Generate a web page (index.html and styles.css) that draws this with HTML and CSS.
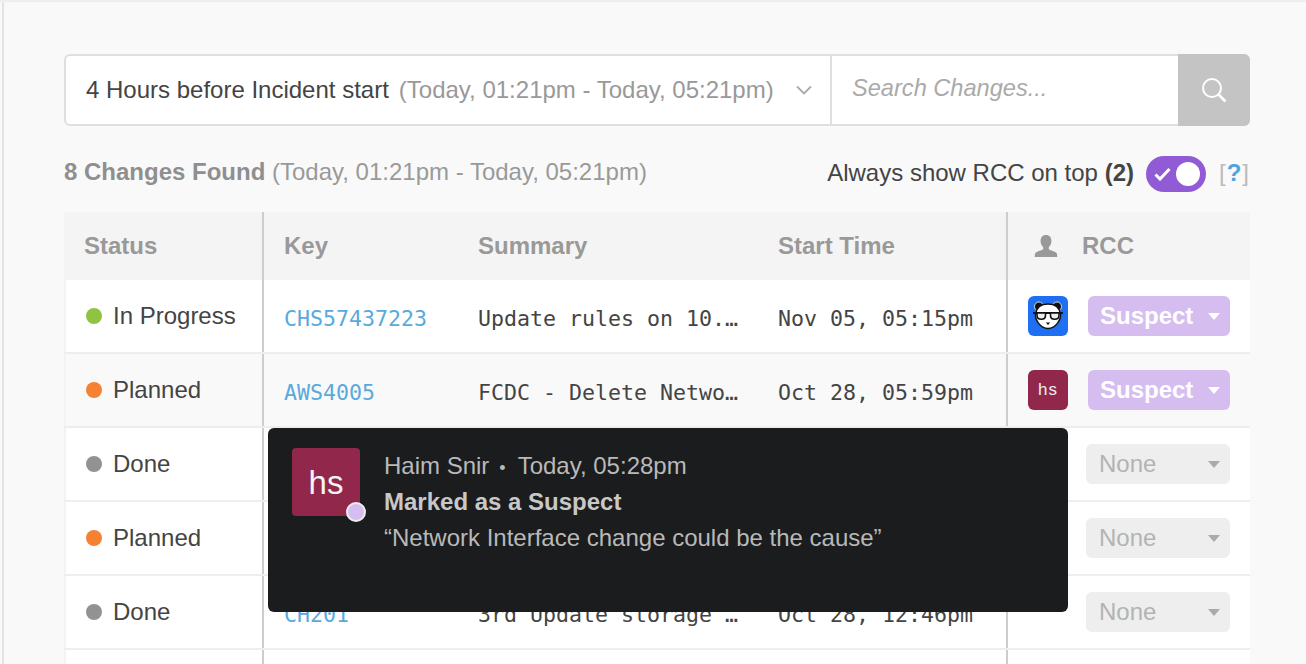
FILE: index.html
```html
<!DOCTYPE html>
<html lang="en">
<head>
<meta charset="utf-8">
<title>Changes</title>
<link rel="stylesheet" href="styles.css">
</head>
<body>
<main class="page">
  <div class="filter">
    <div class="range">
      <span class="range-name">4 Hours before Incident start</span>
      <span class="range-dates">(Today, 01:21pm - Today, 05:21pm)</span>
      <svg class="chevron" width="16" height="10" viewBox="0 0 16 10"><path d="M1 1.500l7 7 7-7" fill="none" stroke="#aaa" stroke-width="1.800"/></svg>
    </div>
    <div class="search"><span class="placeholder">Search Changes...</span></div>
    <div class="search-btn">
      <svg width="28" height="28" viewBox="0 0 28 28"><circle cx="12" cy="12" r="9" fill="none" stroke="#fff" stroke-width="2"/><path d="M18.500 18.500l7 7" stroke="#fff" stroke-width="2.600"/></svg>
    </div>
  </div>

  <div class="summary-bar">
    <div class="found"><strong>8 Changes Found</strong> (Today, 01:21pm - Today, 05:21pm)</div>
    <div class="always">
      <span class="always-label">Always show RCC on top <strong>(2)</strong></span>
      <span class="toggle">
        <svg class="check" width="17" height="14" viewBox="0 0 17 14"><path d="M1.500 7.500l4.500 4.500 9.500-10" fill="none" stroke="#fff" stroke-width="3"/></svg>
        <span class="knob"></span>
      </span>
      <span class="help">[<b>?</b>]</span>
    </div>
  </div>

  <div class="table">
    <div class="row head">
      <div class="cell status">Status</div>
      <div class="cell key divided">Key</div>
      <div class="cell text">Summary</div>
      <div class="cell time">Start Time</div>
      <div class="cell rcc divided">
        <svg class="person" width="24" height="24" viewBox="0 0 24 24"><path d="M12 1c3.600 0 5.400 2.600 5.400 6 0 2.600-1 5-2.600 6.200v1.900c0 1 4 1.600 7.200 3.300 1 .6 1.200 1.600 1.200 4.600H.8c0-3 .2-4 1.200-4.600 3.200-1.700 7.200-2.300 7.200-3.300v-1.900C7.600 12 6.600 9.600 6.600 7c0-3.400 1.800-6 5.400-6z" fill="#999"/></svg>
        <span>RCC</span>
      </div>
    </div>

    <div class="row">
      <div class="cell status"><i class="dot green"></i>In Progress</div>
      <div class="cell key divided mono"><a>CHS57437223</a></div>
      <div class="cell text mono"><span class="clip">Update rules on 10.10.4.2 firewall</span></div>
      <div class="cell time mono">Nov 05, 05:15pm</div>
      <div class="cell rcc divided">
        <span class="avatar panda">
          <svg width="40" height="40" viewBox="0 0 40 40">
            <circle cx="11" cy="10.500" r="4.500" fill="#111" stroke="#fff" stroke-width=".8"/>
            <circle cx="29" cy="10.500" r="4.500" fill="#111" stroke="#fff" stroke-width=".8"/>
            <path d="M20 8c7 0 11.500 4 12.500 10 .8 5-4.500 14.500-12.500 14.500S6.700 23 7.500 18C8.500 12 13 8 20 8z" fill="#fff" stroke="#111" stroke-width="1.400"/>
            <path d="M5 17h30" stroke="#111" stroke-width="1.800"/>
            <path d="M9 17h8.500v2.500c0 2.200-1.600 3.700-4.200 3.700S9 21.700 9 19.500zM22.500 17H31v2.500c0 2.200-1.600 3.700-4.300 3.700s-4.200-1.500-4.200-3.700z" fill="#eee" stroke="#111" stroke-width="1.600"/>
            <path d="M17.800 26.500h4.400L20 29z" fill="#111"/>
          </svg>
        </span>
        <span class="pick suspect">Suspect<i class="caret"></i></span>
      </div>
    </div>

    <div class="row hover">
      <div class="cell status"><i class="dot orange"></i>Planned</div>
      <div class="cell key divided mono"><a>AWS4005</a></div>
      <div class="cell text mono"><span class="clip">FCDC - Delete Network Interface</span></div>
      <div class="cell time mono">Oct 28, 05:59pm</div>
      <div class="cell rcc divided">
        <span class="avatar hs">hs</span>
        <span class="pick suspect">Suspect<i class="caret"></i></span>
      </div>
    </div>

    <div class="row">
      <div class="cell status"><i class="dot gray"></i>Done</div>
      <div class="cell key divided"></div>
      <div class="cell text"></div>
      <div class="cell time"></div>
      <div class="cell rcc divided"><span class="pick none">None<i class="caret"></i></span></div>
    </div>

    <div class="row">
      <div class="cell status"><i class="dot orange"></i>Planned</div>
      <div class="cell key divided"></div>
      <div class="cell text"></div>
      <div class="cell time"></div>
      <div class="cell rcc divided"><span class="pick none">None<i class="caret"></i></span></div>
    </div>

    <div class="row">
      <div class="cell status"><i class="dot gray"></i>Done</div>
      <div class="cell key divided mono"><a>CH201</a></div>
      <div class="cell text mono"><span class="clip">3rd Update storage cluster nodes</span></div>
      <div class="cell time mono">Oct 28, 12:46pm</div>
      <div class="cell rcc divided"><span class="pick none">None<i class="caret"></i></span></div>
    </div>

    <div class="row">
      <div class="cell status"></div>
      <div class="cell key divided"></div>
      <div class="cell text"></div>
      <div class="cell time"></div>
      <div class="cell rcc divided"></div>
    </div>
  </div>

  <aside class="tip">
    <div class="tip-avatar">hs<i class="tip-dot"></i></div>
    <div class="tip-body">
      <div class="tip-line">Haim Snir<span class="sep">•</span>Today, 05:28pm</div>
      <div class="tip-line tip-title">Marked as a Suspect</div>
      <div class="tip-line">“Network Interface change could be the cause”</div>
    </div>
  </aside>
</main>
</body>
</html>
```
FILE: styles.css
```css
* { box-sizing: border-box; }
html, body { margin: 0; height: 664px; overflow: hidden; }
body {
  background: #f9f9f9;
  border-top: 2px solid #eeeeee;
  font-family: "Liberation Sans", Arial, sans-serif;
  font-size: 24px;
  color: #444;
}
.page {
  position: relative;
  height: 662px;
  margin-left: 2px;
  padding: 52px 56px 0 60px;
  border-left: 2px solid #e3e3e3;
}
.filter {
  display: flex;
  height: 72px;
  background: #fff;
  border: 2px solid #dfdfdf;
  border-radius: 6px;
}
.range {
  display: flex;
  align-items: center;
  width: 766px;
  padding-left: 20px;
  border-right: 2px solid #dfdfdf;
  white-space: nowrap;
}
.range-name { color: #444; }
.range-dates { margin-left: 10px; color: #999; }
.chevron { margin-left: 22px; }
.search { flex: 1; display: flex; align-items: center; padding: 0 0 4px 20px; }
.placeholder { font-size: 23.6px; font-style: italic; color: #aaa; }
.search-btn {
  width: 72px;
  margin: -2px -2px -2px 0;
  background: #c4c4c4;
  border-radius: 0 6px 6px 0;
  display: flex;
  align-items: center;
  justify-content: center;
}
.summary-bar {
  display: flex;
  align-items: center;
  justify-content: space-between;
  height: 36px;
  margin: 30px 0 20px;
}
.found { color: #999; padding-bottom: 4px; }
.found strong { color: #8f8f8f; }
.always { display: flex; align-items: center; color: #444; }
.always-label { padding-bottom: 2px; }
.toggle {
  display: flex;
  align-items: center;
  justify-content: space-between;
  width: 60px;
  height: 36px;
  margin-left: 12px;
  padding: 0 6px 0 8px;
  border-radius: 18px;
  background: #925bd6;
}
.knob { width: 24px; height: 24px; border-radius: 50%; background: #fff; }
.help { margin: 0 1px 0 13px; color: #bbb; padding-bottom: 2px; }
.help b { color: #4da5dc; margin: 0 1px; }
.table { display: flex; flex-direction: column; }
.row {
  display: grid;
  grid-template-columns: 198px 216px 300px 228px 244px;
  height: 74px;
  background: #fff;
  box-shadow: inset 2px 0 0 #f3f3f3;
  border-bottom: 2px solid #eeeeee;
}
.row.hover { background: #f9f9f9; }
.row.head {
  height: 68px;
  background: #f4f4f4;
  box-shadow: none;
  border: 0;
  color: #999;
  font-weight: 700;
}
.cell { display: flex; align-items: center; white-space: nowrap; min-width: 0; }
.divided { border-left: 2px solid #cdcdcd; }
.status { padding-left: 22px; }
.head .status { padding-left: 20px; }
.key { padding-left: 20px; }
.mono {
  font-family: "DejaVu Sans Mono", monospace;
  font-size: 21.6px;
  padding-top: 4px;
  color: #444;
}
.mono a { color: #5aa9dd; }
.clip { display: block; width: 261px; overflow: hidden; text-overflow: ellipsis; }
.rcc { padding-left: 20px; }
.head .rcc { padding-left: 26px; }
.person { margin-right: 24px; }
.dot { width: 16px; height: 16px; border-radius: 50%; margin-right: 11px; }
.green { background: #8fc341; }
.orange { background: #f58233; }
.gray { background: #929292; }
.avatar {
  display: flex;
  align-items: center;
  justify-content: center;
  width: 40px;
  height: 40px;
  border-radius: 6px;
  overflow: hidden;
}
.panda { background: #1f6ff2; }
.hs { background: #91274b; color: #eee; font-size: 17px; letter-spacing: 1px; }
.pick {
  position: relative;
  display: flex;
  align-items: center;
  height: 40px;
  border-radius: 6px;
}
.suspect {
  width: 142px;
  margin-left: 20px;
  padding-left: 12px;
  background: #d5bdf0;
  color: #fff;
  font-weight: 700;
}
.none {
  width: 144px;
  margin-left: 58px;
  padding-left: 13px;
  background: #eeeeee;
  color: #b3b3b3;
}
.caret {
  position: absolute;
  right: 10px;
  top: 17px;
  border: 6px solid transparent;
  border-top: 7px solid #fff;
  border-bottom: 0;
}
.none .caret { border-top-color: #aaa; }
.tip {
  position: absolute;
  left: 264px;
  top: 426px;
  display: flex;
  width: 800px;
  height: 184px;
  padding: 20px 24px;
  background: #1b1c1e;
  border-radius: 6px;
  color: #b9b9b9;
}
.tip-avatar {
  position: relative;
  display: flex;
  align-items: center;
  justify-content: center;
  flex: none;
  width: 68px;
  height: 68px;
  padding-top: 2px;
  border-radius: 4px;
  background: #91274b;
  color: #f4f4f4;
  font-size: 33px;
}
.tip-dot {
  position: absolute;
  right: -6px;
  bottom: -6px;
  width: 20px;
  height: 20px;
  border-radius: 50%;
  background: #d5bdf0;
  border: 2px solid #eee;
}
.tip-body { margin-left: 24px; }
.tip-line { height: 36px; line-height: 36px; }
.tip-title { font-weight: 700; color: #c8c8c8; }
.sep { margin: 0 12px 0 10px; font-size: 18px; }
```
